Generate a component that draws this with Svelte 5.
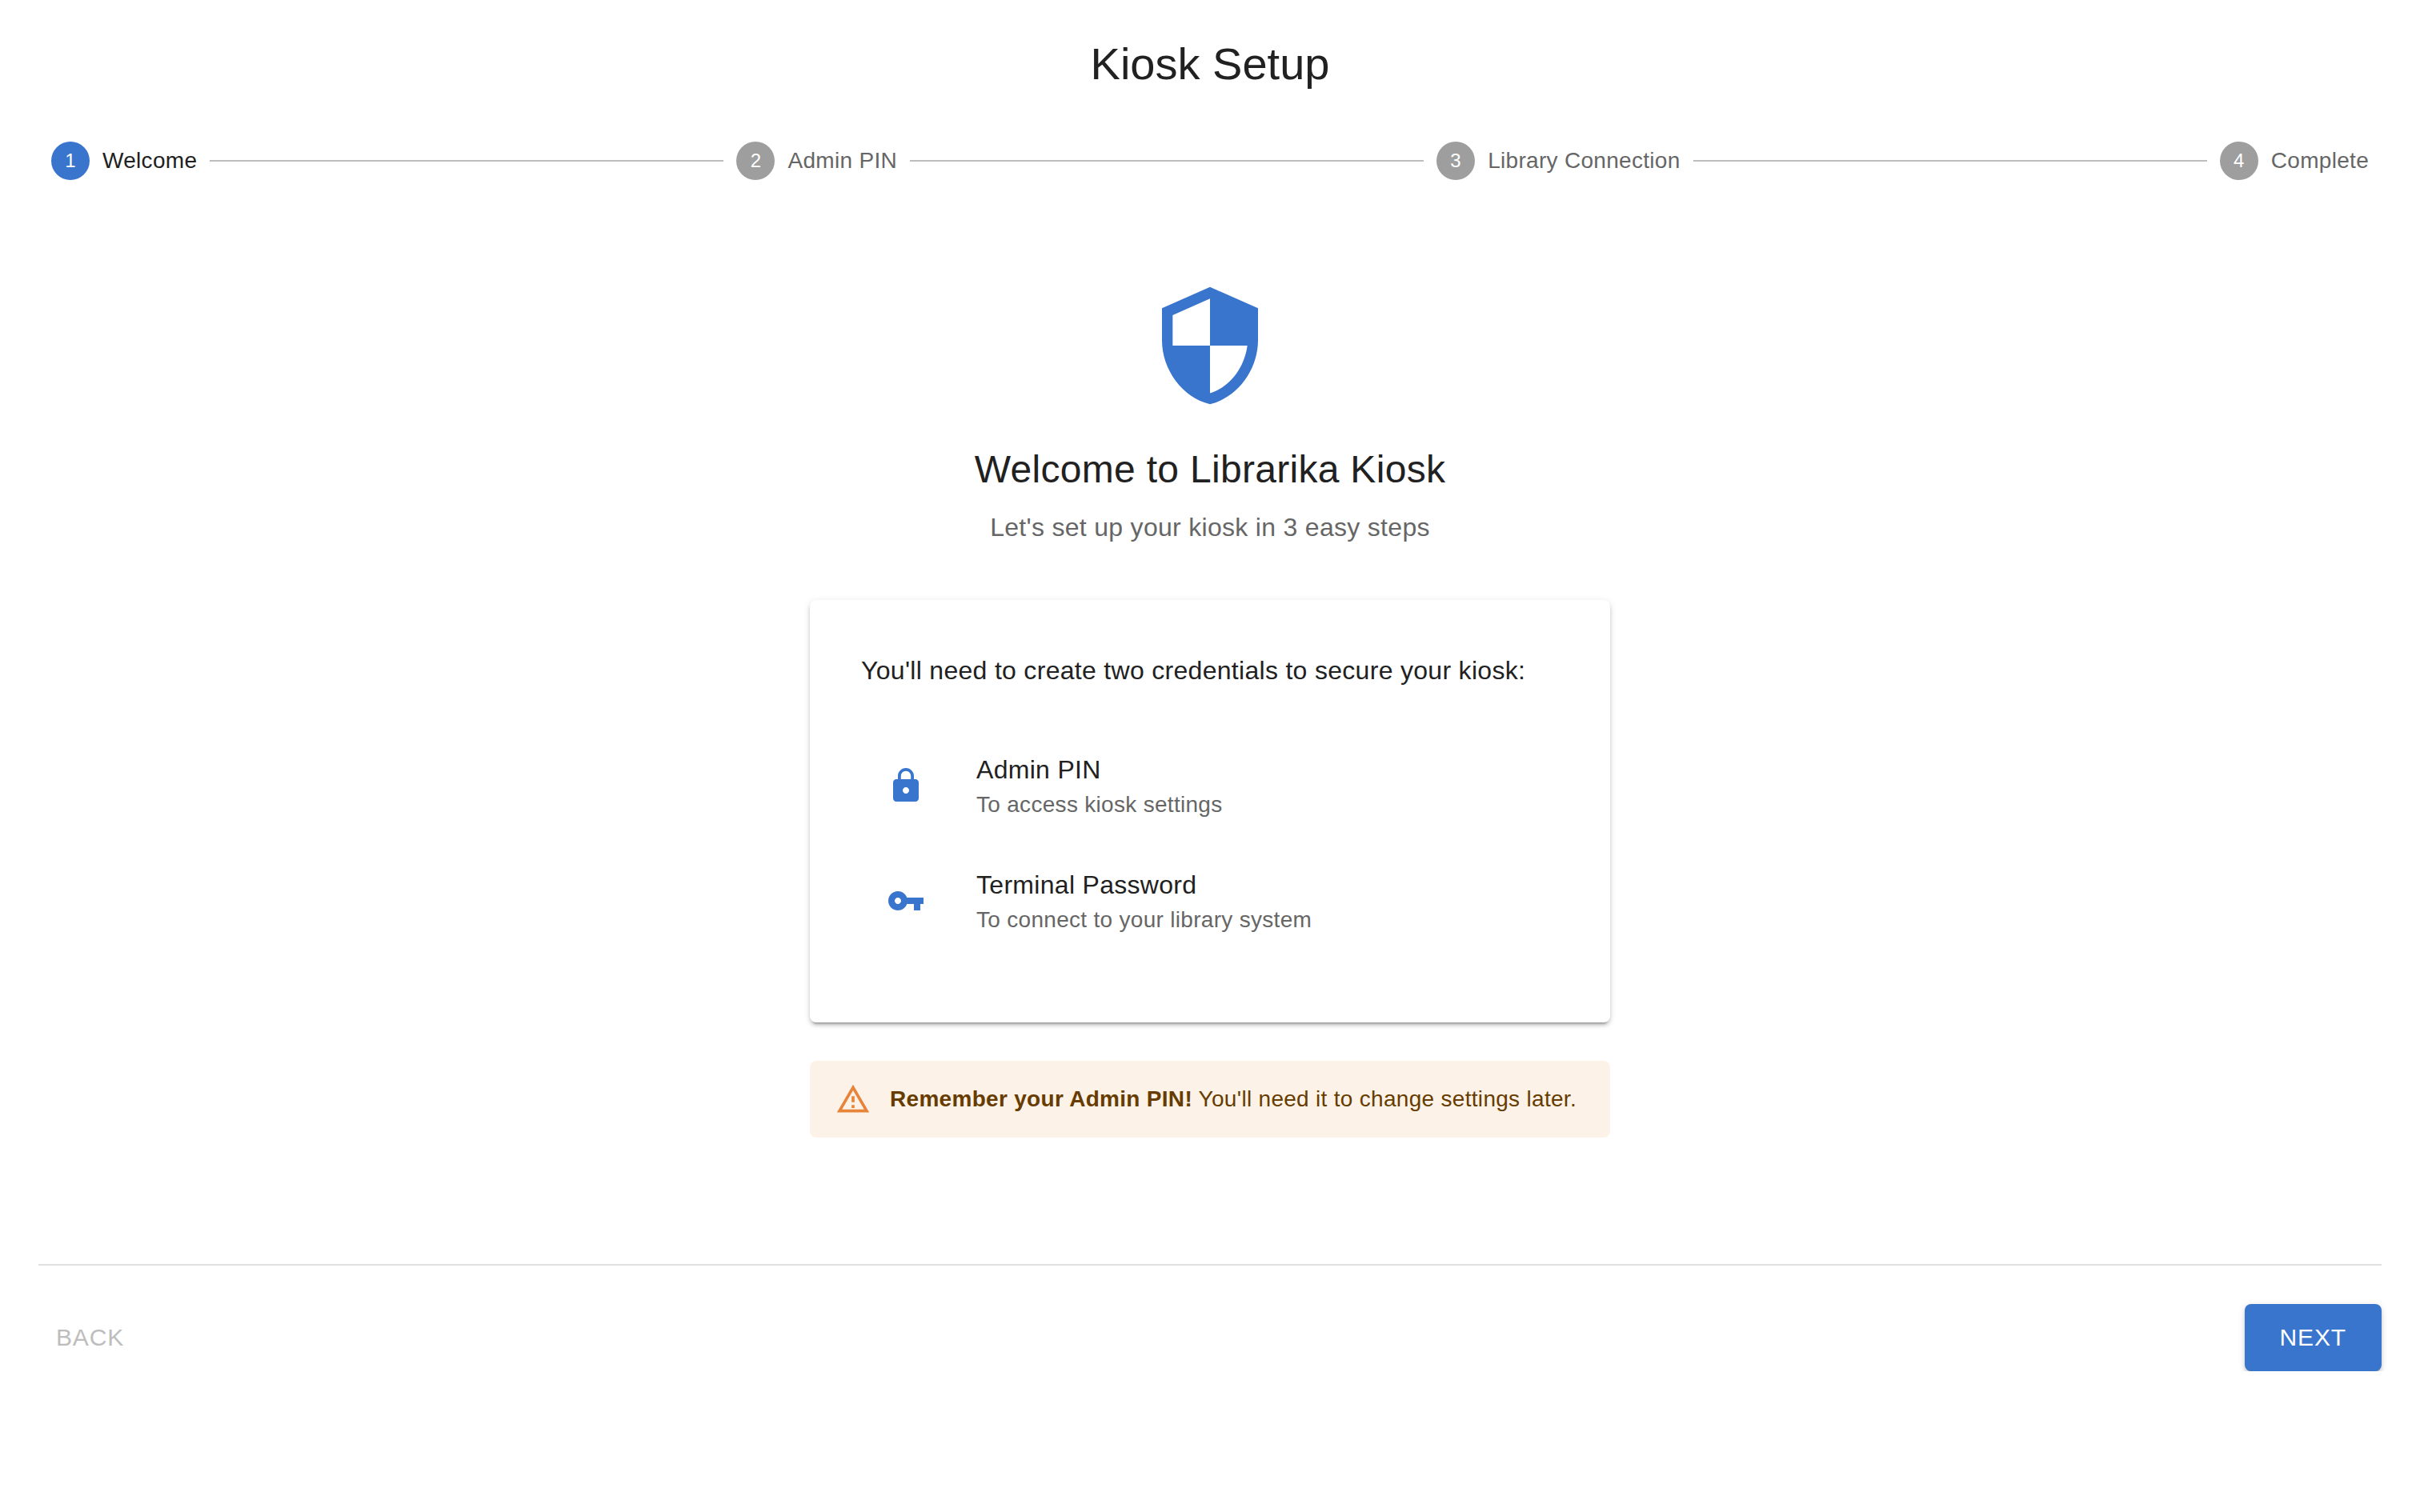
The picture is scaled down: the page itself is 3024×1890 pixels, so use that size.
<script lang="ts">
    const steps = ['Welcome', 'Admin PIN', 'Library Connection', 'Complete'];
    const activeStep = 0;

    const credentials = [
        {
            title: 'Admin PIN',
            hint: 'To access kiosk settings',
            icon: 'M18 8h-1V6c0-2.76-2.24-5-5-5S7 3.24 7 6v2H6c-1.1 0-2 .9-2 2v10c0 1.1.9 2 2 2h12c1.1 0 2-.9 2-2V10c0-1.1-.9-2-2-2zm-6 9c-1.1 0-2-.9-2-2s.9-2 2-2 2 .9 2 2-.9 2-2 2zm3.1-9H8.9V6c0-1.71 1.39-3.1 3.1-3.1 1.71 0 3.1 1.39 3.1 3.1v2z'
        },
        {
            title: 'Terminal Password',
            hint: 'To connect to your library system',
            icon: 'M12.65 10C11.83 7.67 9.61 6 7 6c-3.31 0-6 2.69-6 6s2.69 6 6 6c2.61 0 4.83-1.67 5.65-4H17v4h4v-4h2v-4H12.65zM7 14c-1.1 0-2-.9-2-2s.9-2 2-2 2 .9 2 2-.9 2-2 2z'
        }
    ];
</script>

<div class="page">
    <h1 class="title">Kiosk Setup</h1>

    <div class="stepper">
        {#each steps as label, i}
            {#if i > 0}
                <span class="connector"></span>
            {/if}
            <div class="step">
                <span class="dot" class:active={i === activeStep}>{i + 1}</span>
                <span class="label" class:active={i === activeStep}>{label}</span>
            </div>
        {/each}
    </div>

    <main class="content">
        <svg class="shield" viewBox="0 0 24 24" aria-hidden="true">
            <path d="M12 1L3 5v6c0 5.55 3.84 10.74 9 12 5.16-1.26 9-6.45 9-12V5l-9-4zm0 10.99h7c-.53 4.12-3.28 7.79-7 8.94V12H5V6.3l7-3.11v8.8z" />
        </svg>
        <h2 class="heading">Welcome to Librarika Kiosk</h2>
        <p class="sub">Let's set up your kiosk in 3 easy steps</p>

        <section class="card">
            <p class="intro">You'll need to create two credentials to secure your kiosk:</p>
            <ul class="list">
                {#each credentials as item}
                    <li class="row">
                        <span class="row-icon">
                            <svg viewBox="0 0 24 24" aria-hidden="true"><path d={item.icon} /></svg>
                        </span>
                        <div class="row-text">
                            <span class="row-title">{item.title}</span>
                            <span class="row-hint">{item.hint}</span>
                        </div>
                    </li>
                {/each}
            </ul>
        </section>

        <div class="alert">
            <svg class="alert-icon" viewBox="0 0 24 24" aria-hidden="true">
                <path d="M12 5.99L19.53 19H4.47L12 5.99M12 2L1 21h22L12 2zm1 14h-2v2h2v-2zm0-6h-2v4h2v-4z" />
            </svg>
            <div class="alert-msg"><strong>Remember your Admin PIN!</strong> You'll need it to change settings later.</div>
        </div>
    </main>

    <footer class="footer">
        <button class="btn back" disabled>Back</button>
        <button class="btn next">Next</button>
    </footer>
</div>

<style>
    :global(body) {
        background: #fff;
        color: #212121;
        font-family: "Liberation Sans", Arial, sans-serif;
        letter-spacing: 0.3px;
    }
    .page {
        padding: 47px 48px 0;
    }
    .title {
        margin: 0 0 64px;
        font-size: 56px;
        font-weight: 400;
        line-height: 66px;
        letter-spacing: 0;
        text-align: center;
    }
    .stepper {
        display: flex;
        align-items: center;
    }
    .step {
        display: flex;
        align-items: center;
        gap: 16px;
        padding: 0 16px;
    }
    .connector {
        flex: 1;
        height: 2px;
        background: #bdbdbd;
    }
    .dot {
        display: flex;
        align-items: center;
        justify-content: center;
        width: 48px;
        height: 48px;
        border-radius: 50%;
        background: #9e9e9e;
        color: #fff;
        font-size: 24px;
    }
    .dot.active { background: #3975cd; }
    .label {
        font-size: 28px;
        line-height: 40px;
        color: #666;
    }
    .label.active { color: #212121; }
    .content {
        display: flex;
        flex-direction: column;
        align-items: center;
        padding-top: 127px;
    }
    .shield {
        display: block;
        width: 160px;
        height: 160px;
        fill: #3975cd;
    }
    .heading {
        margin: 43px 0 16px;
        font-size: 48px;
        font-weight: 400;
        line-height: 64px;
    }
    .sub {
        margin: 0 0 67px;
        font-size: 32px;
        line-height: 48px;
        color: #666;
    }
    .card {
        box-sizing: border-box;
        width: 1000px;
        padding: 64px;
        border-radius: 8px;
        background: #fff;
        box-shadow: 0 6px 2px -4px rgba(0,0,0,0.2), 0 4px 4px 0 rgba(0,0,0,0.14), 0 2px 10px 0 rgba(0,0,0,0.12);
    }
    .intro {
        margin: 0 0 32px;
        font-size: 32px;
        line-height: 48px;
    }
    .list {
        margin: 0;
        padding: 16px 0;
        list-style: none;
    }
    .row {
        display: flex;
        align-items: center;
        padding: 16px 32px;
    }
    .row-icon {
        display: flex;
        flex: 0 0 112px;
    }
    .row-icon svg {
        width: 48px;
        height: 48px;
        fill: #3975cd;
    }
    .row-text {
        display: flex;
        flex-direction: column;
        margin: 12px 0;
    }
    .row-title {
        font-size: 32px;
        line-height: 48px;
    }
    .row-hint {
        font-size: 28px;
        line-height: 40px;
        color: #666;
    }
    .alert {
        box-sizing: border-box;
        display: flex;
        width: 1000px;
        margin-top: 48px;
        padding: 12px 32px;
        border-radius: 8px;
        background: #fdf2e7;
        color: #663c00;
    }
    .alert-icon {
        flex: none;
        width: 44px;
        height: 44px;
        margin: 14px 24px 0 0;
        fill: #e8833a;
    }
    .alert-msg {
        padding: 16px 0;
        font-size: 28px;
        line-height: 40px;
    }
    .footer {
        display: flex;
        justify-content: space-between;
        align-items: flex-start;
        margin-top: 158px;
        padding-top: 48px;
        border-top: 2px solid #e0e0e0;
    }
    .btn {
        height: 84px;
        padding: 0 44px;
        border: 0;
        border-radius: 8px;
        font-family: inherit;
        font-size: 30px;
        letter-spacing: 0.86px;
        text-transform: uppercase;
    }
    .back {
        padding: 0 22px;
        background: transparent;
        color: #bdbdbd;
    }
    .next {
        background: #3975cd;
        color: #fff;
        box-shadow: 0 6px 2px -4px rgba(0,0,0,0.2), 0 4px 4px 0 rgba(0,0,0,0.14), 0 2px 10px 0 rgba(0,0,0,0.12);
    }
</style>
